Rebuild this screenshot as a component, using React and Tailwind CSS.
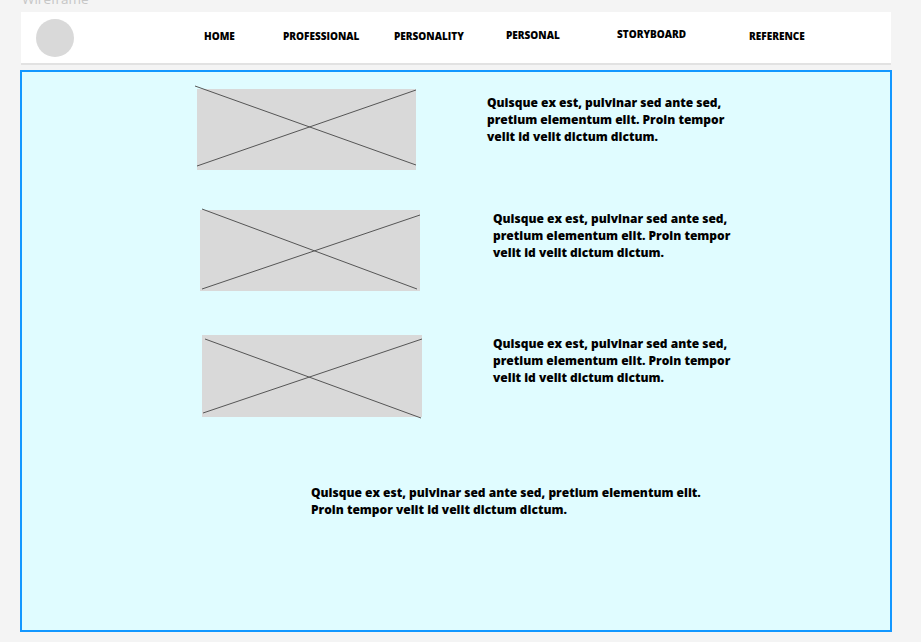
function Placeholder({ w, h, a, b }) {
  return (
    <div className="relative shrink-0 bg-[#d9d9d9]" style={{ width: w, height: h }}>
      <svg className="absolute left-0 top-0 overflow-visible" width={w} height={h}>
        <line x1={a[0]} y1={a[1]} x2={a[2]} y2={a[3]} stroke="#555" strokeWidth="1" />
        <line x1={b[0]} y1={b[1]} x2={b[2]} y2={b[3]} stroke="#555" strokeWidth="1" />
      </svg>
    </div>
  );
}

function Para() {
  return (
    <p className="whitespace-nowrap text-[12px] font-extrabold leading-[17px] text-black">
      Quisque ex est, pulvinar sed ante sed,
      <br />
      pretium elementum elit. Proin tempor
      <br />
      velit id velit dictum dictum.
    </p>
  );
}

export default function App() {
  return (
    <div className="min-h-[642px] w-full bg-[#f4f4f4] font-['Open_Sans',sans-serif]">
      <div className="h-[12px] overflow-hidden pl-[22px]">
        <div className="-mt-[9px] text-[13.5px] leading-[16px] text-[#c6c6c6]">Wireframe</div>
      </div>
      <header className="ml-[21px] flex h-[53px] w-[870px] border-b-2 border-[#e2e2e2] bg-white text-[10px] font-extrabold leading-[11px] text-black">
        <div className="ml-[15px] mt-[7px] h-[38px] w-[38px] shrink-0 rounded-full bg-[#d9d9d9]" />
        <nav className="ml-[130px] flex items-start">
          <div className="w-[79px] pt-[19px]">HOME</div>
          <div className="w-[111px] pt-[19px]">PROFESSIONAL</div>
          <div className="w-[112px] pt-[19px]">PERSONALITY</div>
          <div className="w-[111px] pt-[18px]">PERSONAL</div>
          <div className="w-[132px] pt-[17px]">STORYBOARD</div>
          <div className="pt-[19px]">REFERENCE</div>
        </nav>
      </header>
      <main className="ml-[20px] mt-[5px] h-[562px] w-[872px] border-2 border-[#1297ff] bg-[#e0fcff]">
        <div className="ml-[175px] mt-[17px] flex items-start">
          <Placeholder w={219} h={81} a={[-2, -3, 219, 76]} b={[0, 77, 219, 1]} />
          <div className="ml-[71px] mt-[5px]"><Para /></div>
        </div>
        <div className="ml-[178px] mt-[40px] flex items-start">
          <Placeholder w={220} h={81} a={[2, -1, 217, 79]} b={[2, 79, 220, 5]} />
          <div className="ml-[73px] mt-0"><Para /></div>
        </div>
        <div className="ml-[180px] mt-[44px] flex items-start">
          <Placeholder w={220} h={82} a={[3, 4, 219, 83]} b={[1, 78, 220, 4]} />
          <div className="ml-[71px] mt-0"><Para /></div>
        </div>
        <p className="ml-[289px] mt-[67px] whitespace-nowrap text-[12px] font-extrabold leading-[17px] text-black">
          Quisque ex est, pulvinar sed ante sed, pretium elementum elit.
          <br />
          Proin tempor velit id velit dictum dictum.
        </p>
      </main>
    </div>
  );
}
